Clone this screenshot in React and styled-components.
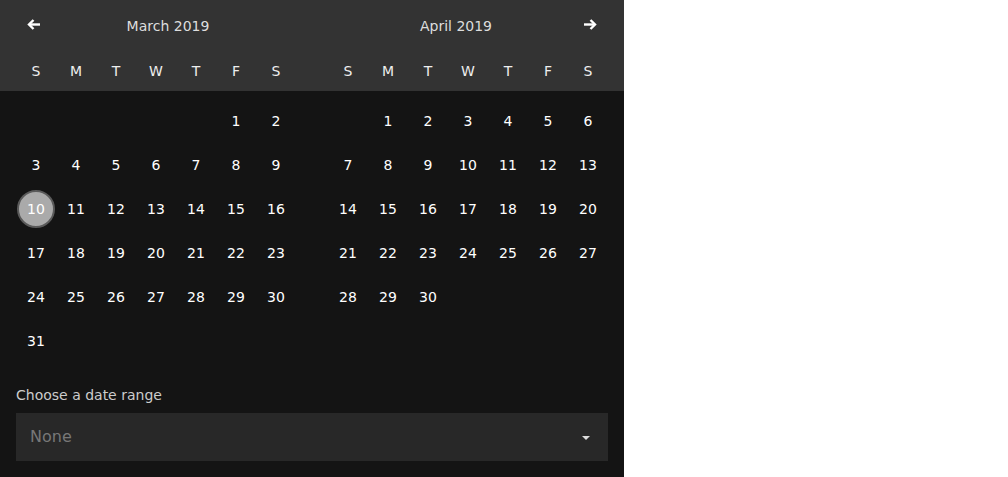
import styled, { createGlobalStyle } from "styled-components";

const GlobalStyle = createGlobalStyle`
  body {
    margin: 0;
    background: #ffffff;
    font-family: "DejaVu Sans", sans-serif;
  }
`;

const WEEKDAYS = ["S", "M", "T", "W", "T", "F", "S"];

const MONTHS = [
  { title: "March 2019", offset: 5, days: 31, nav: "prev" },
  { title: "April 2019", offset: 1, days: 30, nav: "next" },
];

const SELECTED = { month: 0, day: 10 };

const buildWeeks = (offset, days) => {
  const cells = [];
  for (let i = 0; i < offset; i++) cells.push(null);
  for (let d = 1; d <= days; d++) cells.push(d);
  const weeks = [];
  for (let i = 0; i < cells.length; i += 7) weeks.push(cells.slice(i, i + 7));
  return weeks;
};

// bold material-style arrow, flipped for "next"
const ArrowIcon = ({ dir }) => (
  <svg
    width="13"
    height="11"
    viewBox="0 0 13 11"
    fill="none"
    stroke="#ffffff"
    strokeWidth="2.4"
    style={{ transform: dir === "next" ? "scaleX(-1)" : "none" }}
  >
    <path d="M2 5.5H13" />
    <path d="M6.5 1L2 5.5L6.5 10" strokeLinejoin="miter" />
  </svg>
);

const App = () => {
  return (
    <>
      <GlobalStyle />
      <Picker>
        <Header>
          {MONTHS.map((m) => (
            <HeaderColumn key={m.title}>
              <TitleRow $reverse={m.nav === "next"}>
                <NavButton $align={m.nav === "prev" ? "flex-end" : "flex-start"}>
                  <ArrowIcon dir={m.nav} />
                </NavButton>
                <MonthTitle>{m.title}</MonthTitle>
              </TitleRow>
              <WeekRow>
                {WEEKDAYS.map((w, i) => (
                  <Weekday key={i}>{w}</Weekday>
                ))}
              </WeekRow>
            </HeaderColumn>
          ))}
        </Header>
        <Body>
          <Months>
            {MONTHS.map((m, mi) => (
              <MonthGrid key={m.title}>
                {buildWeeks(m.offset, m.days).map((week, wi) => (
                  <DayRow key={wi}>
                    {week.map((d, di) => (
                      <DayCell key={di}>
                        {d && (
                          <Day $selected={mi === SELECTED.month && d === SELECTED.day}>
                            {d}
                          </Day>
                        )}
                      </DayCell>
                    ))}
                  </DayRow>
                ))}
              </MonthGrid>
            ))}
          </Months>
          <Field>
            <Label>Choose a date range</Label>
            <Select>
              <Placeholder>None</Placeholder>
              <Caret />
            </Select>
          </Field>
        </Body>
      </Picker>
    </>
  );
};

const Picker = styled.div`
  width: 624px;
  height: 477px;
  background-color: #141414;
  display: flex;
  flex-direction: column;
`;

const Header = styled.div`
  background-color: #333333;
  height: 91px;
  padding: 0 16px;
  display: flex;
  gap: 32px;
  box-sizing: border-box;
`;

const HeaderColumn = styled.div`
  width: 280px;
  display: flex;
  flex-direction: column;
`;

const TitleRow = styled.div`
  height: 50px;
  display: flex;
  flex-direction: ${(p) => (p.$reverse ? "row-reverse" : "row")};
  align-items: center;
`;

const NavButton = styled.div`
  width: 24px;
  height: 24px;
  display: flex;
  align-items: center;
  justify-content: ${(p) => p.$align};
  margin-top: -2px;
  cursor: pointer;
`;

const MonthTitle = styled.div`
  flex: 1;
  text-align: center;
  color: #dddddd;
  font-size: 14px;
  padding-top: 2px;
`;

const WeekRow = styled.div`
  display: grid;
  grid-template-columns: repeat(7, 40px);
  height: 41px;
  align-items: center;
`;

const Weekday = styled.div`
  text-align: center;
  color: #eeeeee;
  font-size: 14px;
`;

const Body = styled.div`
  flex: 1;
  padding: 8px 16px 16px;
  display: flex;
  flex-direction: column;
`;

const Months = styled.div`
  display: flex;
  gap: 32px;
  height: 264px;
`;

const MonthGrid = styled.div`
  width: 280px;
  display: flex;
  flex-direction: column;
`;

const DayRow = styled.div`
  display: grid;
  grid-template-columns: repeat(7, 40px);
  height: 44px;
`;

const DayCell = styled.div`
  display: flex;
  align-items: center;
  justify-content: center;
`;

const Day = styled.div`
  width: 38px;
  height: 38px;
  box-sizing: border-box;
  border-radius: 50%;
  display: flex;
  align-items: center;
  justify-content: center;
  color: #ffffff;
  font-size: 14px;
  background-color: ${(p) => (p.$selected ? "#aaaaaa" : "transparent")};
  border: 2px solid ${(p) => (p.$selected ? "#5a5a5a" : "transparent")};
`;

const Field = styled.div`
  margin-top: auto;
  display: flex;
  flex-direction: column;
  gap: 8px;
`;

const Label = styled.div`
  color: #cccccc;
  font-size: 14px;
  line-height: 20px;
`;

const Select = styled.div`
  height: 48px;
  background-color: #282828;
  display: flex;
  align-items: center;
  padding: 0 18px 0 14px;
`;

const Placeholder = styled.div`
  flex: 1;
  color: #777777;
  font-size: 16px;
  margin-top: -2px;
`;

const Caret = styled.div`
  width: 0;
  height: 0;
  border-left: 4px solid transparent;
  border-right: 4px solid transparent;
  border-top: 4px solid #dddddd;
  margin-top: 1px;
`;

export default App;
